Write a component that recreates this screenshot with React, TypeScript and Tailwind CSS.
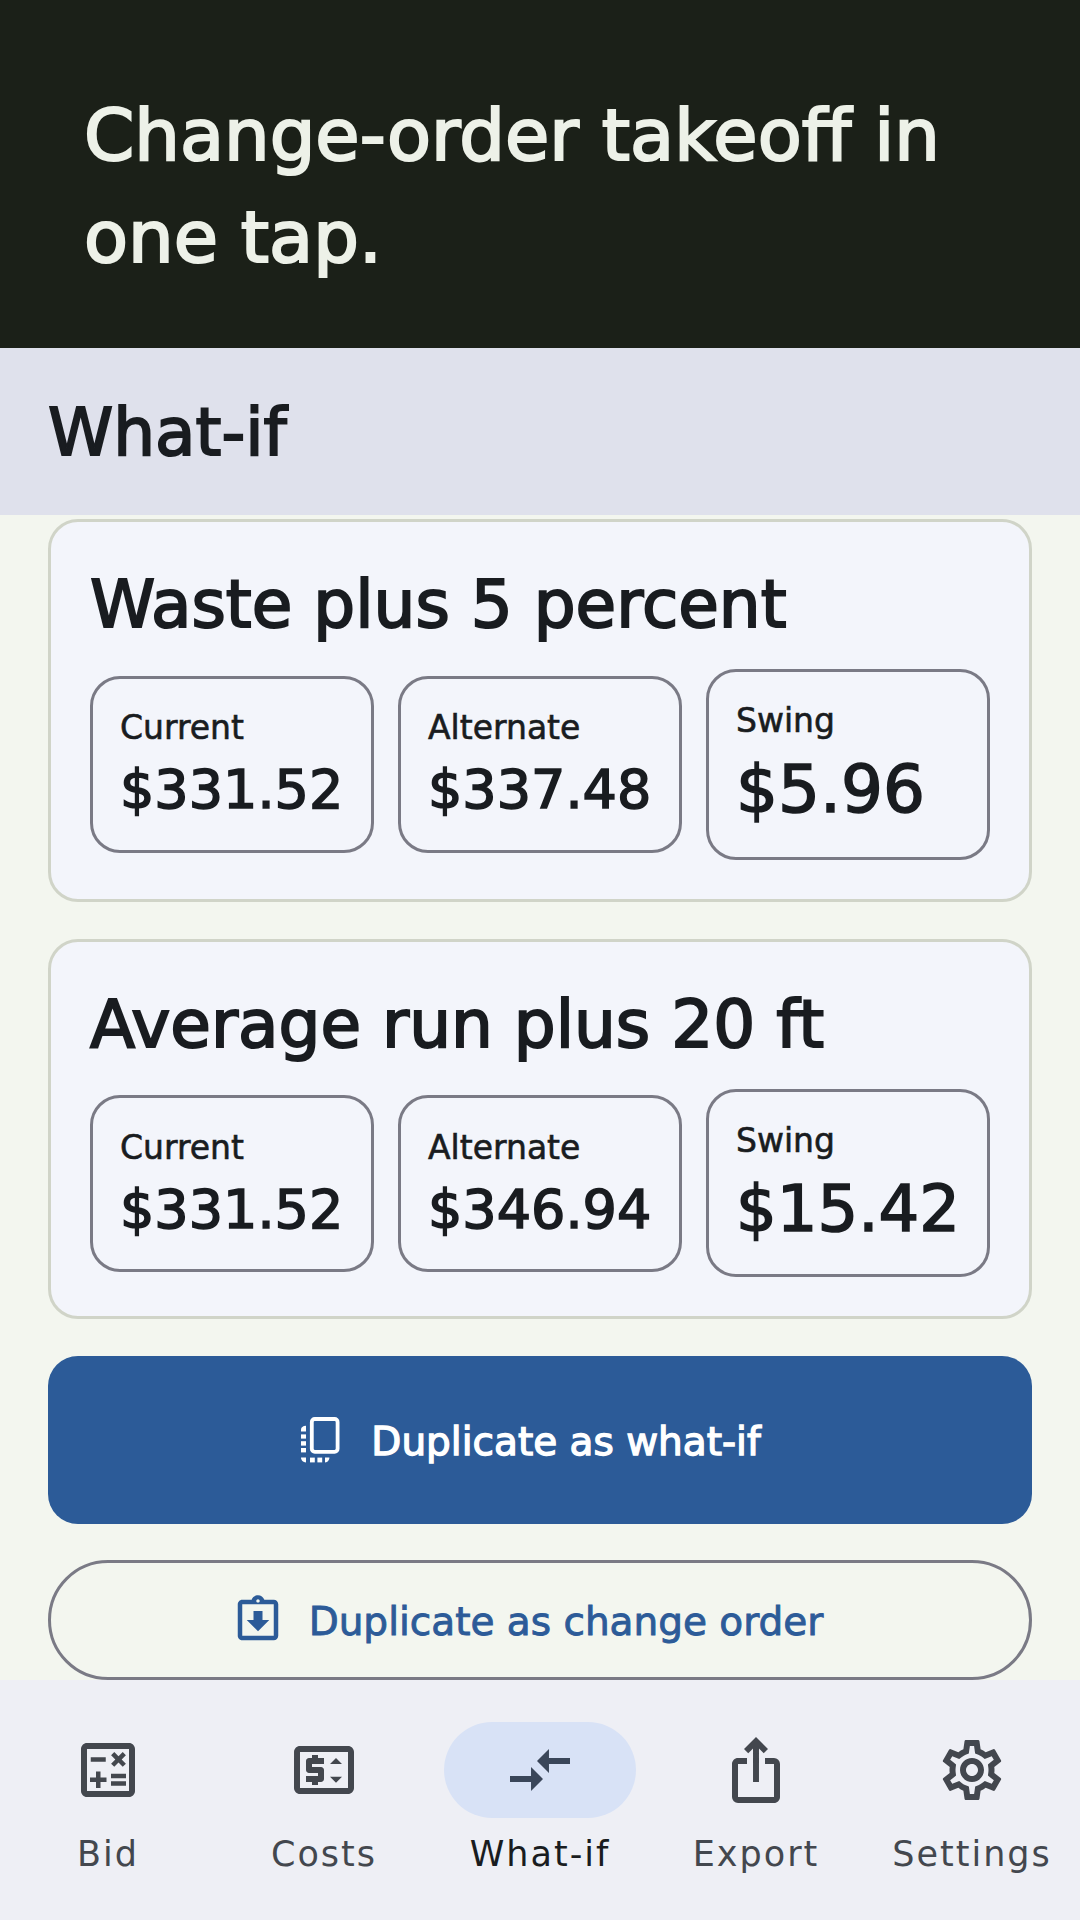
import React from "react";
import {
  MdCompareArrows,
  MdIosShare,
  MdOutlineAssignmentReturned,
  MdOutlineCalculate,
  MdOutlinePriceChange,
  MdOutlineSettings,
} from "react-icons/md";

const scenarios = [
  { title: "Waste plus 5 percent", current: "$331.52", alternate: "$337.48", swing: "$5.96", swingText: "text-[66px]", height: "h-[383px]", swingHeight: "h-[191px]", nudge: "" },
  { title: "Average run plus 20 ft", current: "$331.52", alternate: "$346.94", swing: "$15.42", swingText: "text-[64px]", height: "h-[380px]", swingHeight: "h-[188px]", nudge: "pt-[3px]" },
];

const navItems = [
  { label: "Bid", icon: MdOutlineCalculate },
  { label: "Costs", icon: MdOutlinePriceChange },
  { label: "What-if", icon: MdCompareArrows, active: true },
  { label: "Export", icon: MdIosShare },
  { label: "Settings", icon: MdOutlineSettings },
];

// the dotted phone icon on the main button
const DuplicateIcon: React.FC = () => (
  <svg viewBox="0 0 54 54" className="size-[54px]" fill="currentColor">
    <rect x="18.8" y="6" width="25.8" height="32.8" rx="3" fill="none" stroke="currentColor" strokeWidth="3.8" />
    <path d="M13 12.7v5.8H8v-2c0-2 1.8-3.8 5-3.8z" />
    <rect x="8" y="21.4" width="5" height="4.2" />
    <rect x="8" y="28.2" width="5" height="4.4" />
    <rect x="8" y="35" width="5" height="4.4" />
    <path d="M8 44.6h5v4.8c-3 0-5-2.2-5-4.8z" />
    <rect x="17" y="44.6" width="4.8" height="4.8" />
    <rect x="24.4" y="44.6" width="4.8" height="4.8" />
    <path d="M32 44.6h4.4c0 2.4-1.6 4.8-4.4 4.8z" />
  </svg>
);

const Stat: React.FC<{ label: string; value: string; valueClass?: string; className?: string }> = ({ label, value, valueClass, className }) => (
  <div className={`flex flex-col justify-center rounded-[30px] border-[3px] border-[#7a7a85] px-[27px] ${className ?? ""}`}>
    <span className="text-[33px] leading-[38px] [-webkit-text-stroke:0.6px_currentColor]">{label}</span>
    <span className={`mt-[11px] whitespace-nowrap [-webkit-text-stroke:1.6px_currentColor] ${valueClass ?? "text-[54px] leading-[63px]"}`}>{value}</span>
  </div>
);

const App: React.FC = () => {
  return (
    <div className="flex h-[1920px] w-[1080px] flex-col overflow-hidden bg-[#f3f6ef] font-['DejaVu_Sans',sans-serif] text-[#191c20]">
      <header className="h-[348px] bg-[#1b2018] px-[84px] pt-[84px] text-[72px] leading-[102px] text-[#edf1e8] [-webkit-text-stroke:2.2px_currentColor]">
        Change-order takeoff in one tap.
      </header>

      <div className="flex h-[167px] items-center bg-[#dfe1ec] px-[48px] pt-[2px] text-[66px] [-webkit-text-stroke:2px_currentColor]">What-if</div>

      <main className="flex min-h-0 flex-1 flex-col gap-[37px] overflow-hidden px-[48px] pt-[4px]">
        {scenarios.map((s) => (
          <section key={s.title} className={`shrink-0 rounded-[30px] border-[3px] border-[#d0d4c8] bg-[#f3f5fb] px-[39px] pt-[39px] ${s.height}`}>
            <h2 className="h-[84px] text-[66px] leading-[88px] [-webkit-text-stroke:2px_currentColor]">{s.title}</h2>
            <div className="mt-[24px] grid grid-cols-3 items-center gap-[24px]">
              <Stat label="Current" value={s.current} className={`h-[177px] ${s.nudge}`} />
              <Stat label="Alternate" value={s.alternate} className={`h-[177px] ${s.nudge}`} />
              <Stat label="Swing" value={s.swing} valueClass={`${s.swingText} leading-[77px]`} className={`${s.swingHeight} ${s.nudge}`} />
            </div>
          </section>
        ))}

        <button className="flex h-[168px] shrink-0 items-center justify-center gap-[24px] rounded-[30px] bg-[#2c5b98] pr-[26px] text-[39px] text-white">
          <DuplicateIcon />
          <span className="pt-[5px] [-webkit-text-stroke:1.3px_currentColor]">Duplicate as what-if</span>
        </button>

        <button className="-mt-px flex h-[120px] shrink-0 items-center justify-center gap-[24px] rounded-full border-[3px] border-[#7a7a85] pr-[26px] text-[39px] text-[#2c5b98]">
          <MdOutlineAssignmentReturned className="size-[54px]" />
          <span className="pt-[5px] [-webkit-text-stroke:0.9px_currentColor]">Duplicate as change order</span>
        </button>
      </main>

      <nav className="grid h-[240px] shrink-0 grid-cols-5 bg-[#eeeff5] pt-[42px]">
        {navItems.map(({ label, icon: Icon, active }) => (
          <div key={label} className="flex flex-col items-center">
            <div className={`flex h-[96px] w-[192px] items-center justify-center rounded-full ${active ? "bg-[#d8e2f6] text-[#3a4659]" : "text-[#43474e]"}`}>
              <Icon className="size-[72px]" />
            </div>
            <span className={`mt-[12px] text-[35px] leading-[48px] tracking-[2px] ${active ? "text-[#191c20]" : "text-[#43474e]"}`}>{label}</span>
          </div>
        ))}
      </nav>
    </div>
  );
};

export default App;
